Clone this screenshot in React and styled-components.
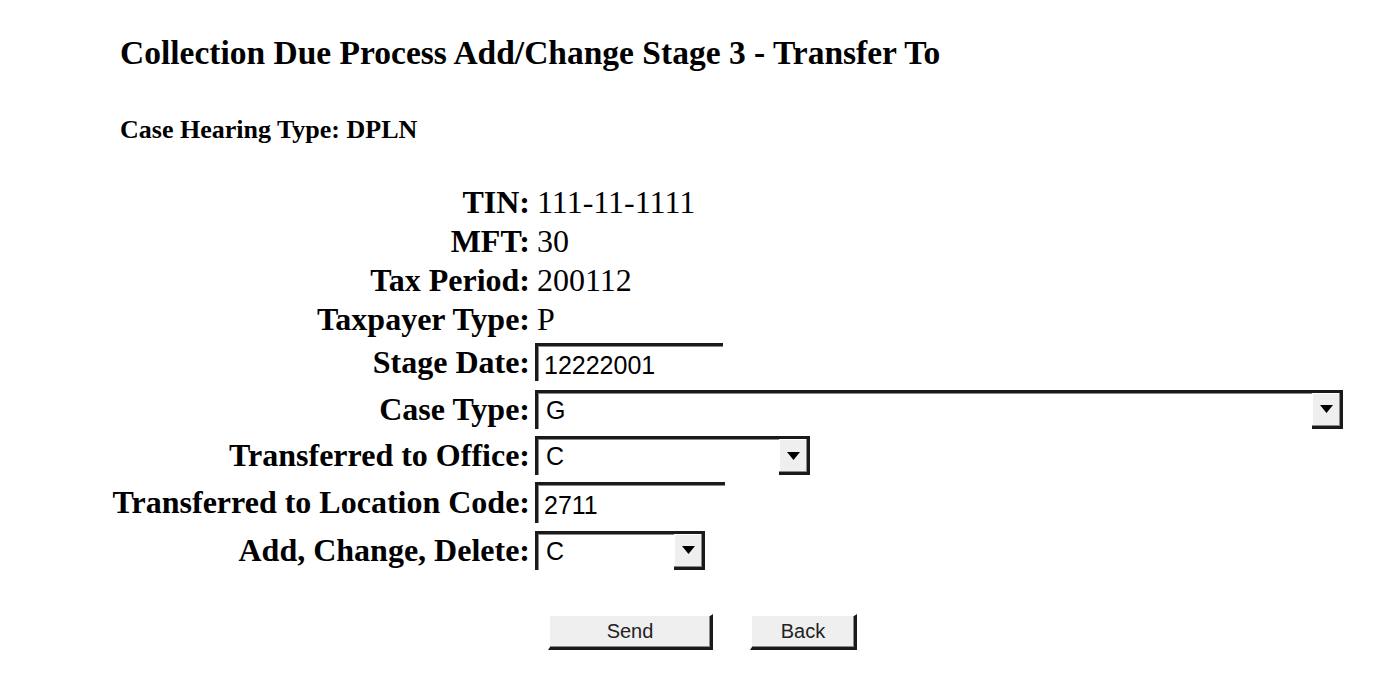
import React from "react";
import styled, { createGlobalStyle } from "styled-components";

const GlobalStyle = createGlobalStyle`
  html, body {
    margin: 0;
    padding: 0;
    background: #ffffff;
  }
  body {
    font-family: "Liberation Serif", "Times New Roman", serif;
    color: #000000;
  }
`;

const Page = styled.div`
  width: 1380px;
  height: 690px;
  overflow: hidden;
  padding-top: 33px;
  box-sizing: border-box;
`;

const Title = styled.h1`
  margin: 0 0 0 120px;
  font-size: 33.5px;
  line-height: 40px;
  font-weight: bold;
  white-space: nowrap;
`;

const SubTitle = styled.h2`
  margin: 41px 0 0 120px;
  font-size: 26px;
  line-height: 32px;
  font-weight: bold;
`;

const Form = styled.div`
  margin-top: 37px;
  display: flex;
  flex-direction: column;
`;

const Row = styled.div`
  display: grid;
  grid-template-columns: 530px auto;
  column-gap: ${(p) => (p.$field ? "5px" : "7px")};
  align-items: center;
  height: ${(p) => p.$h || 39}px;
`;

const Label = styled.div`
  text-align: right;
  font-size: 32px;
  line-height: 39px;
  font-weight: bold;
  white-space: nowrap;
`;

const Value = styled.div`
  font-size: 32px;
  line-height: 39px;
  white-space: nowrap;
`;

const TextInput = styled.input`
  box-sizing: border-box;
  width: ${(p) => p.$w}px;
  height: ${(p) => p.$hh || 38}px;
  margin: 0;
  padding: 3px 0 0 6px;
  font-family: "Liberation Sans", Arial, sans-serif;
  font-size: 25px;
  color: #000;
  background: #fff;
  border: 0;
  border-top: 3px solid #1a1a1a;
  border-left: 3px solid #1a1a1a;
  box-shadow: inset 1px 1px 0 #8a8a8a;
  outline: none;
`;

const SelectBox = styled.div`
  box-sizing: border-box;
  width: ${(p) => p.$w}px;
  height: 39px;
  display: flex;
  align-items: stretch;
  background: #fff;
  border-top: 3px solid #1a1a1a;
  border-left: 3px solid #1a1a1a;
  box-shadow: inset 1px 1px 0 #8a8a8a;
`;

const SelectText = styled.div`
  flex: 1;
  padding: 2px 0 0 8px;
  font-family: "Liberation Sans", Arial, sans-serif;
  font-size: 25px;
  line-height: 30px;
`;

const ArrowButton = styled.div`
  box-sizing: border-box;
  width: 31px;
  display: flex;
  align-items: center;
  justify-content: center;
  background: #efefef;
  border-right: 3px solid #1a1a1a;
  border-bottom: 3px solid #1a1a1a;
  box-shadow: inset -1px -1px 0 #8a8a8a, inset 1px 1px 0 #ffffff;
`;

const ButtonRow = styled.div`
  display: flex;
  gap: 37px;
  margin-top: 40px;
  padding-left: 548px;
`;

const Button = styled.button`
  box-sizing: border-box;
  width: ${(p) => p.$w}px;
  height: 36px;
  margin: 0;
  padding: 0;
  font-family: "Liberation Sans", Arial, sans-serif;
  font-size: 20px;
  color: #222;
  background: #efefef;
  border: 0;
  border-top: 2px solid #ffffff;
  border-left: 2px solid #ffffff;
  border-right: 3px solid #1a1a1a;
  border-bottom: 3px solid #1a1a1a;
  box-shadow: inset -1px -1px 0 #8a8a8a;
  cursor: pointer;
`;

function Arrow() {
  return (
    <svg width="13" height="8" viewBox="0 0 13 8">
      <path d="M0 0 H13 L6.5 8 Z" fill="#000" />
    </svg>
  );
}

function Select({ value, width }) {
  return (
    <SelectBox $w={width}>
      <SelectText>{value}</SelectText>
      <ArrowButton>
        <Arrow />
      </ArrowButton>
    </SelectBox>
  );
}

export default function App() {
  return (
    <>
      <GlobalStyle />
      <Page>
        <Title>Collection Due Process Add/Change Stage 3 - Transfer To</Title>
        <SubTitle>Case Hearing Type: DPLN</SubTitle>
        <Form>
          <Row>
            <Label>TIN:</Label>
            <Value>111-11-1111</Value>
          </Row>
          <Row>
            <Label>MFT:</Label>
            <Value>30</Value>
          </Row>
          <Row>
            <Label>Tax Period:</Label>
            <Value>200112</Value>
          </Row>
          <Row>
            <Label>Taxpayer Type:</Label>
            <Value>P</Value>
          </Row>
          <Row $field $h={46}>
            <Label>Stage Date:</Label>
            <TextInput $w={188} defaultValue="12222001" />
          </Row>
          <Row $field $h={48}>
            <Label>Case Type:</Label>
            <Select value="G" width={808} />
          </Row>
          <Row $field $h={45}>
            <Label>Transferred to Office:</Label>
            <Select value="C" width={275} />
          </Row>
          <Row $field $h={48}>
            <Label>Transferred to Location Code:</Label>
            <TextInput $w={190} $hh={41} defaultValue="2711" />
          </Row>
          <Row $field $h={48}>
            <Label>Add, Change, Delete:</Label>
            <Select value="C" width={170} />
          </Row>
        </Form>
        <ButtonRow>
          <Button $w={165}>Send</Button>
          <Button $w={107}>Back</Button>
        </ButtonRow>
      </Page>
    </>
  );
}
